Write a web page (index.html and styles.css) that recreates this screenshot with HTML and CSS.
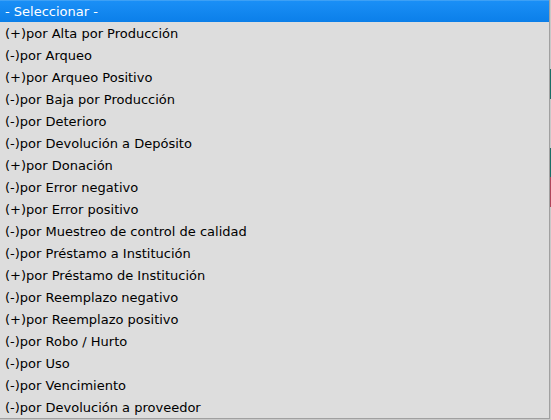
FILE: index.html
```html
<!DOCTYPE html>
<html lang="es">
<head>
    <meta charset="UTF-8">
    <title>Motivo de ajuste</title>
    <link rel="stylesheet" href="styles.css">
</head>
<body>
    <div class="page">
        <ul class="options">
            <li class="option selected">- Seleccionar -</li>
            <li class="option">(+)por Alta por Producción</li>
            <li class="option">(-)por Arqueo</li>
            <li class="option">(+)por Arqueo Positivo</li>
            <li class="option">(-)por Baja por Producción</li>
            <li class="option">(-)por Deterioro</li>
            <li class="option">(-)por Devolución a Depósito</li>
            <li class="option">(+)por Donación</li>
            <li class="option">(-)por Error negativo</li>
            <li class="option">(+)por Error positivo</li>
            <li class="option">(-)por Muestreo de control de calidad</li>
            <li class="option">(-)por Préstamo a Institución</li>
            <li class="option">(+)por Préstamo de Institución</li>
            <li class="option">(-)por Reemplazo negativo</li>
            <li class="option">(+)por Reemplazo positivo</li>
            <li class="option">(-)por Robo / Hurto</li>
            <li class="option">(-)por Uso</li>
            <li class="option">(-)por Vencimiento</li>
            <li class="option">(-)por Devolución a proveedor</li>
        </ul>
        <!-- lo que asoma de la página detrás del desplegable -->
        <div class="behind">
            <span class="gap-a"></span>
            <span class="teal-a"></span>
            <span class="gap-b"></span>
            <span class="teal-b"></span>
            <span class="red"></span>
        </div>
    </div>
</body>
</html>
```

FILE: styles.css
```css
* {
    margin: 0;
    padding: 0;
    box-sizing: border-box;
}

body {
    background: #c8c8c8;
    font-family: 'DejaVu Sans', Tahoma, sans-serif;
    overflow: hidden;
}

.page {
    display: flex;
    align-items: flex-start;
}

.options {
    list-style: none;
    width: 550px;
    background: #dddddd;
    border-right: 1px solid #a0a0a0;
    border-bottom: 1px solid #a0a0a0;
}

.option {
    height: 22px;
    line-height: 21px;
    padding: 1px 0 0 5px;
    font-size: 13px;
    color: #000;
    white-space: nowrap;
}

.option.selected {
    background: linear-gradient(#1a8ff6, #0b7fe9);
    border-top: 1px solid #3da0f5;
    padding-top: 0;
    color: #fff;
}

.behind {
    display: flex;
    flex-direction: column;
    width: 1px;
}

.gap-a {
    height: 69px;
    background: #c8c8c8;
}

.teal-a {
    height: 30px;
    background: #1a6e66;
}

.gap-b {
    height: 49px;
    background: #c8c8c8;
}

.teal-b {
    height: 29px;
    background: #1a6e66;
}

.red {
    height: 30px;
    background: #b0455a;
}
```
